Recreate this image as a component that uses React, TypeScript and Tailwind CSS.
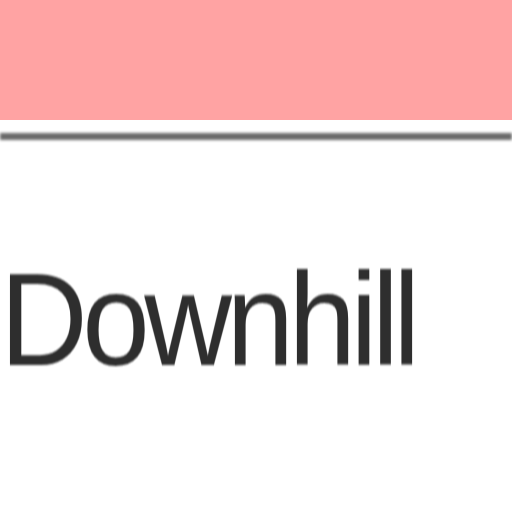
export default function App() {
  return (
    <div className="w-[512px] h-[512px] bg-white overflow-hidden flex flex-col">
      <div className="h-[120px] bg-[#ffa3a3] shrink-0" />
      <div className="h-[13px] shrink-0" />
      <div className="h-[7px] bg-[#6a6a6a] blur-[1.5px] shrink-0" />
      <div className="pt-[114px]">
        <h1
          className="text-[132px] leading-none text-[#2e2e2e] blur-[0.8px] whitespace-nowrap tracking-[-6px] scale-x-[0.92] origin-left"
          style={{ fontFamily: '"Liberation Sans", Arial, sans-serif' }}
        >
          Downhill
        </h1>
      </div>
    </div>
  );
}
